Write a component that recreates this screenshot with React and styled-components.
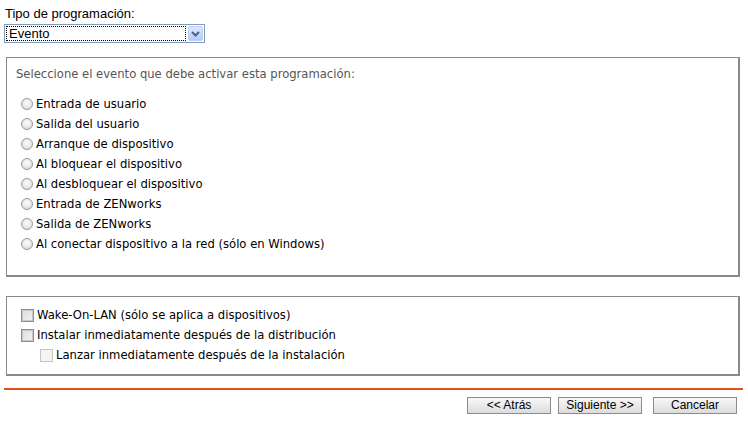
import React from 'react';
import styled, { createGlobalStyle } from 'styled-components';

const GlobalStyle = createGlobalStyle`
  html, body {
    margin: 0;
    padding: 0;
    background: #ffffff;
  }
`;

const events = [
  'Entrada de usuario',
  'Salida del usuario',
  'Arranque de dispositivo',
  'Al bloquear el dispositivo',
  'Al desbloquear el dispositivo',
  'Entrada de ZENworks',
  'Salida de ZENworks',
  'Al conectar dispositivo a la red (sólo en Windows)',
];

export default function App() {
  return (
    <Page>
      <GlobalStyle />
      <Label>Tipo de programación:</Label>
      <Select>
        <SelectValue>Evento</SelectValue>
        <SelectArrow>
          <svg width="9" height="6" viewBox="0 0 9 6">
            <path d="M1 1 L4.5 4.5 L8 1" fill="none" stroke="#4d6185" strokeWidth="2" />
          </svg>
        </SelectArrow>
      </Select>

      <Box $height={220} $top={14}>
        <Heading>Seleccione el evento que debe activar esta programación:</Heading>
        <List>
          {events.map((e) => (
            <Row key={e}>
              <Radio />
              <span>{e}</span>
            </Row>
          ))}
        </List>
      </Box>

      <Box $height={80} $top={19}>
        <CheckList>
          <Row>
            <Check />
            <span>Wake-On-LAN (sólo se aplica a dispositivos)</span>
          </Row>
          <Row>
            <Check />
            <span>Instalar inmediatamente después de la distribución</span>
          </Row>
          <Row $indent>
            <Check $disabled />
            <span>Lanzar inmediatamente después de la instalación</span>
          </Row>
        </CheckList>
      </Box>

      <Rule />

      <Buttons>
        <Button>&lt;&lt; Atrás</Button>
        <Button>Siguiente &gt;&gt;</Button>
        <Button $gap={4}>Cancelar</Button>
      </Buttons>
    </Page>
  );
}

const Page = styled.div`
  width: 748px;
  height: 421px;
  padding-top: 6px;
  box-sizing: border-box;
  font-family: "Liberation Sans", Arial, sans-serif;
`;

const Label = styled.div`
  margin-left: 5px;
  font-size: 13px;
  line-height: 16px;
  color: #000;
`;

const Select = styled.div`
  margin: 2px 0 0 4px;
  width: 201px;
  height: 19px;
  box-sizing: border-box;
  border: 1px solid #7f9db9;
  display: flex;
  align-items: stretch;
  padding: 1px;
`;

const SelectValue = styled.div`
  flex: 1;
  border: 1px dotted #000;
  font-size: 13px;
  line-height: 13px;
  padding-left: 2px;
  color: #000;
`;

const SelectArrow = styled.div`
  width: 15px;
  margin-left: 2px;
  box-sizing: border-box;
  border: 1px solid #b9cdf7;
  border-radius: 2px;
  background: linear-gradient(#dfe8fd, #b6caf7);
  display: flex;
  align-items: center;
  justify-content: center;
`;

const Box = styled.div`
  margin: ${(p) => p.$top}px 0 0 6px;
  width: 734px;
  height: ${(p) => p.$height}px;
  box-sizing: border-box;
  border: 1px solid #8a8a8a;
  border-right-width: 2px;
  border-bottom-width: 2px;
  font-family: "DejaVu Sans", Verdana, sans-serif;
  font-size: 11.6px;
`;

const Heading = styled.div`
  margin: 9px 0 0 9px;
  color: #555;
  line-height: 14px;
`;

const List = styled.div`
  margin: 13px 0 0 14px;
  display: flex;
  flex-direction: column;
`;

const CheckList = styled.div`
  margin: 8px 0 0 14px;
  display: flex;
  flex-direction: column;
`;

const Row = styled.div`
  display: flex;
  align-items: center;
  gap: 3px;
  height: 20px;
  color: #000;
  padding-left: ${(p) => (p.$indent ? 19 : 0)}px;
`;

const Radio = styled.span`
  width: 12px;
  height: 12px;
  box-sizing: border-box;
  border-radius: 50%;
  border: 1px solid #9a9a9a;
  background: radial-gradient(circle at 50% 40%, #fdfdfd 0%, #e8e8e8 55%, #cdcdcd 100%);
`;

const Check = styled.span`
  width: 13px;
  height: 13px;
  box-sizing: border-box;
  border: 1px solid ${(p) => (p.$disabled ? '#c4c4c4' : '#8f8f8f')};
  background: ${(p) =>
    p.$disabled
      ? '#f4f4f4'
      : 'linear-gradient(135deg, #dcdcdc, #f3f3f3)'};
  box-shadow: ${(p) => (p.$disabled ? 'none' : 'inset 0 0 0 1px #c8c8c8')};
`;

const Rule = styled.div`
  margin: 12px 0 0 4px;
  width: 739px;
  height: 2px;
  background: #d9531e;
`;

const Buttons = styled.div`
  display: flex;
  justify-content: flex-end;
  gap: 7px;
  margin: 7px 11px 0 0;
`;

const Button = styled.div`
  width: 84px;
  height: 17px;
  box-sizing: border-box;
  margin-left: ${(p) => p.$gap || 0}px;
  border: 1px solid #8c8c8c;
  background: linear-gradient(#f8f8f8, #dcdcdc);
  font-size: 12px;
  line-height: 15px;
  text-align: center;
  color: #000;
`;
